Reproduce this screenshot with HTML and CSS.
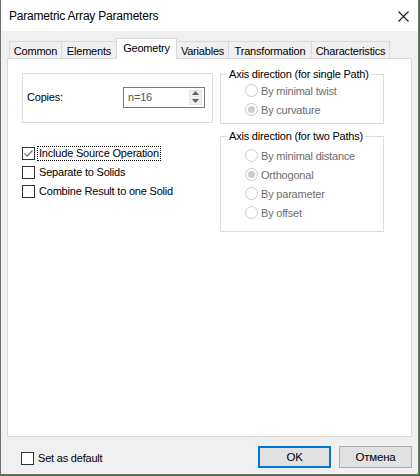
FILE: index.html
```html
<!DOCTYPE html>
<html>
<head>
<meta charset="utf-8">
<link rel="stylesheet" href="styles.css">
</head>
<body>
<div class="window">
  <div class="titlebar">
    <span class="title">Parametric Array Parameters</span>
    <svg class="close" width="11" height="11" viewBox="0 0 11 11"><path d="M0.5 0.5 L10.5 10.5 M10.5 0.5 L0.5 10.5" stroke="#1a1a1a" stroke-width="1.1" fill="none"/></svg>
  </div>
  <div class="tabs">
    <div class="tab t-common">Common</div>
    <div class="tab t-elements">Elements</div>
    <div class="tab tab-active t-geometry">Geometry</div>
    <div class="tab t-variables">Variables</div>
    <div class="tab t-transformation">Transformation</div>
    <div class="tab t-characteristics">Characteristics</div>
  </div>
  <div class="panel">
    <div class="col-left">
      <div class="copies">
        <span class="copies-label">Copies:</span>
        <div class="spin">
          <span class="spin-text">n=16</span>
          <div class="spin-btns">
            <div class="spin-btn"><svg width="7" height="4" viewBox="0 0 7 4"><path d="M3.5 0 L7 4 L0 4 Z" fill="#606060"/></svg></div>
            <div class="spin-btn"><svg width="7" height="4" viewBox="0 0 7 4"><path d="M0 0 L7 0 L3.5 4 Z" fill="#606060"/></svg></div>
          </div>
        </div>
      </div>
      <div class="checks">
        <div class="check-row">
          <span class="cbox"><svg width="11" height="11" viewBox="0 0 11 11"><path d="M1.5 5.5 L4.2 8.2 L9.5 2.5" stroke="#6d6d6d" stroke-width="1.2" fill="none"/></svg></span>
          <span class="check-label focus">Include Source Operation</span>
        </div>
        <div class="check-row">
          <span class="cbox"></span>
          <span class="check-label">Separate to Solids</span>
        </div>
        <div class="check-row">
          <span class="cbox"></span>
          <span class="check-label">Combine Result to one Solid</span>
        </div>
      </div>
    </div>
    <div class="col-right">
      <fieldset class="group g1">
        <legend>Axis direction (for single Path)</legend>
        <div class="radios">
          <div class="radio-row"><span class="radio"></span><span class="radio-label">By minimal twist</span></div>
          <div class="radio-row"><span class="radio checked"></span><span class="radio-label">By curvature</span></div>
        </div>
      </fieldset>
      <fieldset class="group g2">
        <legend>Axis direction (for two Paths)</legend>
        <div class="radios">
          <div class="radio-row"><span class="radio"></span><span class="radio-label">By minimal distance</span></div>
          <div class="radio-row"><span class="radio checked"></span><span class="radio-label">Orthogonal</span></div>
          <div class="radio-row"><span class="radio"></span><span class="radio-label">By parameter</span></div>
          <div class="radio-row"><span class="radio"></span><span class="radio-label">By offset</span></div>
        </div>
      </fieldset>
    </div>
  </div>
  <div class="footer">
    <div class="footer-check">
      <span class="cbox"></span>
      <span class="check-label">Set as default</span>
    </div>
    <div class="buttons">
      <div class="btn btn-default">OK</div>
      <div class="btn">Отмена</div>
    </div>
  </div>
</div>
</body>
</html>
```

FILE: styles.css
```css
* { box-sizing: border-box; }
html, body { margin: 0; padding: 0; }
body {
  width: 420px;
  height: 476px;
  background: #3f6f3a;
  font-family: "Liberation Sans", Arial, sans-serif;
  font-size: 11px;
  letter-spacing: -0.2px;
  color: #000;
}
.window {
  width: 419px;
  height: 475px;
  background: #f0f0f0;
  border: 1px solid #707070;
  border-top: none;
  display: flex;
  flex-direction: column;
}
.titlebar {
  height: 31px;
  background: #fff;
  display: flex;
  align-items: center;
  justify-content: space-between;
  padding: 0 9px 0 8px;
  flex: none;
}
.title {
  font-size: 12px;
  letter-spacing: -0.2px;
  color: #000;
}
.close { display: block; margin-top: 1px; }

.tabs {
  display: flex;
  align-items: flex-end;
  height: 21px;
  margin: 7px 0 -1px 8px;
  position: relative;
  z-index: 1;
  flex: none;
}
.tab {
  height: 17px;
  margin-bottom: 1px;
  border: 1px solid #d9d9d9;
  border-bottom: none;
  margin-right: -1px;
  background: #f0f0f0;
  display: flex;
  align-items: center;
  justify-content: center;
  padding-top: 1px;
  white-space: nowrap;
}
.tab-active {
  height: 21px;
  margin-bottom: 0;
  background: #fff;
  padding-top: 0;
  padding-bottom: 3px;
  position: relative;
  z-index: 2;
}
.t-common { width: 53px; }
.t-elements { width: 56px; }
.t-geometry { width: 61px; }
.t-variables { width: 53px; }
.t-transformation { width: 84px; }
.t-characteristics { width: 79px; }

.panel {
  margin: 0 6px;
  height: 379px;
  background: #fff;
  border: 1px solid #d9d9d9;
  display: grid;
  grid-template-columns: 191px 164px;
  column-gap: 7px;
  align-items: start;
  padding: 9px 0 0 14px;
  flex: none;
}

.copies {
  margin-top: 5px;
  height: 50px;
  border: 1px solid #dcdcdc;
  display: flex;
  align-items: center;
  justify-content: space-between;
  padding: 0 7px 2px 4px;
}
.spin {
  width: 82px;
  height: 21px;
  border: 1px solid #7a7a7a;
  background: #fff;
  display: flex;
  align-items: center;
  justify-content: space-between;
  padding: 0 2px 0 4px;
}
.spin-text { color: #555; }
.spin-btns {
  display: flex;
  flex-direction: column;
  gap: 1px;
  width: 13px;
  height: 15px;
}
.spin-btn {
  flex: 1;
  background: #f0f0f0;
  border: 1px solid #e3e3e3;
  display: flex;
  align-items: center;
  justify-content: center;
}
.spin-btn svg { display: block; }

.checks { margin-top: 21px; }
.check-row {
  height: 19px;
  display: flex;
  align-items: center;
}
.cbox {
  width: 13px;
  height: 13px;
  border: 1px solid #333;
  background: #fff;
  flex: none;
  display: flex;
  align-items: center;
  justify-content: center;
}
.cbox svg { display: block; }
.check-label {
  margin-left: 2px;
  padding: 0 1px;
  line-height: 13px;
  border: 1px dotted transparent;
}
.check-label.focus { border-color: #000; }

.group {
  margin: 0;
  min-width: 0;
  border: 1px solid #dcdcdc;
  padding: 0 0 4px 0;
}
.group legend {
  margin-left: 6px;
  padding: 0 2px;
  line-height: 13px;
  white-space: nowrap;
}
.radios { padding-left: 24px; }
.g2 {
  margin-top: 6px;
  padding-top: 3px;
  padding-bottom: 9px;
}
.radio-row {
  height: 19px;
  display: flex;
  align-items: center;
}
.radio {
  width: 13px;
  height: 13px;
  border: 1px solid #cccccc;
  border-radius: 50%;
  background: #fff;
  flex: none;
  display: flex;
  align-items: center;
  justify-content: center;
}
.radio.checked::after {
  content: "";
  width: 7px;
  height: 7px;
  border-radius: 50%;
  background: #cccccc;
}
.radio-label {
  margin-left: 3px;
  color: #6d6d6d;
}

.footer {
  flex: 1;
  display: flex;
  justify-content: space-between;
  align-items: flex-start;
  padding: 9px 6px 0 20px;
}
.footer-check {
  display: flex;
  align-items: center;
  height: 22px;
  margin-top: 1px;
}
.buttons {
  display: flex;
  gap: 8px;
}
.btn {
  width: 73px;
  height: 22px;
  background: #e1e1e1;
  border: 1px solid #adadad;
  display: flex;
  align-items: center;
  justify-content: center;
  font-size: 11.5px;
}
.btn-default {
  border: 2px solid #0078d7;
}
```
